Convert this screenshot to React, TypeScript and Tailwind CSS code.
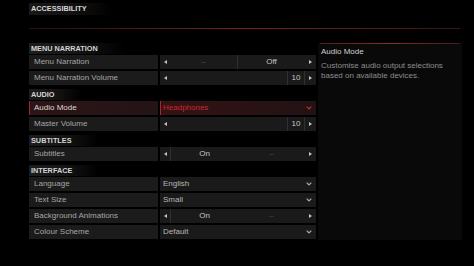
import React from "react";

type Row =
  | { kind: "toggle"; label: string; value: string; side: "left" | "right" }
  | { kind: "slider"; label: string; value: number }
  | { kind: "select"; label: string; value: string; active?: boolean };

interface Section {
  title: string;
  rows: Row[];
}

const sections: Section[] = [
  {
    title: "MENU NARRATION",
    rows: [
      { kind: "toggle", label: "Menu Narration", value: "Off", side: "right" },
      { kind: "slider", label: "Menu Narration Volume", value: 10 },
    ],
  },
  {
    title: "AUDIO",
    rows: [
      { kind: "select", label: "Audio Mode", value: "Headphones", active: true },
      { kind: "slider", label: "Master Volume", value: 10 },
    ],
  },
  {
    title: "SUBTITLES",
    rows: [{ kind: "toggle", label: "Subtitles", value: "On", side: "left" }],
  },
  {
    title: "INTERFACE",
    rows: [
      { kind: "select", label: "Language", value: "English" },
      { kind: "select", label: "Text Size", value: "Small" },
      { kind: "toggle", label: "Background Animations", value: "On", side: "left" },
      { kind: "select", label: "Colour Scheme", value: "Default" },
    ],
  },
];

const Arrow: React.FC<{ dir: "left" | "right" }> = ({ dir }) => (
  <svg width="3" height="4" viewBox="0 0 3 4" className="shrink-0">
    <path d={dir === "left" ? "M3 0L0 2L3 4Z" : "M0 0L3 2L0 4Z"} fill="#c4c4c4" />
  </svg>
);

const Chevron: React.FC<{ color: string }> = ({ color }) => (
  <svg width="6" height="4" viewBox="0 0 6 4" fill="none" className="shrink-0">
    <path d="M0.7 0.7L3 3L5.3 0.7" stroke={color} strokeWidth="1.2" />
  </svg>
);

const Value: React.FC<{ row: Row }> = ({ row }) => {
  if (row.kind === "toggle") {
    const on = (
      <div className="flex-1 h-full flex items-center justify-center border-l border-[#303030] text-[#c8c8c8]">
        {row.value}
      </div>
    );
    const off = (
      <div className="flex-1 h-full flex items-center justify-center text-[#484848]">–</div>
    );
    return (
      <div className="flex-1 h-full flex items-center bg-[#1a1a1a]">
        <div className="w-[10px] h-full flex items-center justify-center">
          <Arrow dir="left" />
        </div>
        {row.side === "left" ? on : off}
        {row.side === "left" ? off : on}
        <div className="w-[11px] h-full flex items-center justify-center">
          <Arrow dir="right" />
        </div>
      </div>
    );
  }
  if (row.kind === "slider") {
    return (
      <div className="flex-1 h-full flex items-center bg-[#1a1a1a]">
        <div className="w-[10px] h-full flex items-center justify-center">
          <Arrow dir="left" />
        </div>
        <div className="flex-1" />
        <div className="w-[18px] h-full flex items-center justify-center border-x border-[#303030] text-[#c8c8c8]">
          {row.value}
        </div>
        <div className="w-[11px] h-full flex items-center justify-center">
          <Arrow dir="right" />
        </div>
      </div>
    );
  }
  return (
    <div
      className={
        row.active
          ? "flex-1 h-full flex items-center pl-[2px] pr-[4px] border-l border-[#a3262b] bg-gradient-to-r from-[#341214] to-[#221214] text-[#c8282e]"
          : "flex-1 h-full flex items-center pl-[3px] pr-[4px] bg-[#1a1a1a] text-[#b8b8b8]"
      }
    >
      <span className="flex-1">{row.value}</span>
      <Chevron color={row.active ? "#c8282e" : "#aaaaaa"} />
    </div>
  );
};

export default function App() {
  return (
    <div
      className="w-[474px] h-[266px] bg-black overflow-hidden pl-[29px] pt-[3px] text-[8px] leading-none"
      style={{ fontFamily: '"Liberation Sans", Arial, sans-serif' }}
    >
      <div className="h-[12px] w-[84px] flex items-center pl-[2px] bg-gradient-to-r from-[#181818] via-[#121212] to-transparent">
        <span className="text-[7.3px] font-bold text-[#d6d6d6]">ACCESSIBILITY</span>
      </div>
      <div className="mt-[13px] h-[1px] w-[431px] bg-gradient-to-r from-[#2a0d0d] via-[#7a2424] to-[#3a1414]" />

      <div className="mt-[13px] flex items-start gap-[2px]">
        <div className="w-[287px] shrink-0 flex flex-col gap-[3px]">
          {sections.map((s) => (
            <div key={s.title} className="flex flex-col">
              <div className="h-[13px] flex items-center">
                <div className="h-[11px] flex items-center pl-[2px] pr-[26px] bg-gradient-to-r from-[#1d1d1d] via-[#151515] to-transparent">
                  <span className="text-[7.3px] font-bold text-[#d4d4d4]">{s.title}</span>
                </div>
              </div>
              <div className="flex flex-col gap-[2px]">
                {s.rows.map((r) => {
                  const active = r.kind === "select" && r.active;
                  return (
                    <div key={r.label} className="h-[14px] flex gap-[2px]">
                      <div
                        className={
                          active
                            ? "w-[129px] h-full flex items-center pl-[4px] border-l border-[#a3262b] bg-gradient-to-r from-[#2e1416] to-[#231416] text-[#d6d6d6]"
                            : "w-[129px] h-full flex items-center pl-[5px] bg-[#1b1b1b] text-[#a6a6a6]"
                        }
                      >
                        {r.label}
                      </div>
                      <Value row={r} />
                    </div>
                  );
                })}
              </div>
            </div>
          ))}
        </div>

        <div className="mt-[1px] w-[144px] shrink-0 h-[197px] bg-[#090909] flex flex-col">
          <div className="h-[1px] mx-[2px] bg-gradient-to-r from-[#5a1c1c] via-[#8a2a2a] to-[#4a1818]" />
          <div className="pl-[3px] pt-[3px] text-[#d0d0d0] leading-[10px]">Audio Mode</div>
          <div className="pl-[3px] mt-[4px] text-[#8e8e8e] leading-[10px]">
            Customise audio output selections
            <br />
            based on available devices.
          </div>
        </div>
      </div>
    </div>
  );
}
